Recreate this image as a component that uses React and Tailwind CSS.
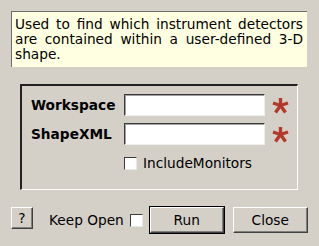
import React from 'react';

const FONT = { fontFamily: '"DejaVu Sans", Verdana, sans-serif' };

function Asterisk() {
  return (
    <svg width="17" height="17" viewBox="0 0 17 17" className="shrink-0">
      <g stroke="#b3392b" strokeWidth="3.4" strokeLinecap="butt">
        <line x1="8.5" y1="9" x2="8.5" y2="1" />
        <line x1="8.5" y1="8.5" x2="1" y2="6" />
        <line x1="8.5" y1="8.5" x2="16" y2="6" />
        <line x1="8.5" y1="8.5" x2="3.5" y2="15.5" />
        <line x1="8.5" y1="8.5" x2="13.5" y2="15.5" />
      </g>
    </svg>
  );
}

function Field({ label }) {
  return (
    <div className="flex items-center h-[22px]">
      <span className="w-[93px] font-bold text-[13.7px] text-black">{label}</span>
      <div className="w-[141px] h-[22px] bg-white border-t border-l border-t-[#3c3c3c] border-l-[#3c3c3c] border-r border-b border-r-[#f0f0f0] border-b-[#f0f0f0] shadow-[inset_1px_1px_0_#a0a0a0]" />
      <div className="ml-[7px]">
        <Asterisk />
      </div>
    </div>
  );
}

function Check() {
  return (
    <div className="w-[13px] h-[13px] bg-white border-t border-l border-t-[#3c3c3c] border-l-[#3c3c3c] border-r border-b border-r-[#e8e8e8] border-b-[#e8e8e8] shrink-0" />
  );
}

export default function App() {
  return (
    <div className="w-[319px] h-[246px] bg-[#d4d0c8] flex flex-col pt-[11px] overflow-hidden text-black" style={FONT}>
      <div className="ml-[11px] w-[296px] h-[56px] bg-[#ffffe1] border-t border-l border-[#6e6e6e] border-r-0 border-b-0 pl-[3px] pr-[4px] pt-[5px]">
        <p className="text-[13.7px] leading-[15px] text-justify">
          Used to find which instrument detectors are contained within a user-defined 3-D shape.
        </p>
      </div>

      <div className="ml-[20px] mt-[17px] w-[278px] h-[106px] border-t-2 border-l-2 border-t-[#222] border-l-[#222] border-r border-b border-r-white border-b-white pl-[9px] pt-[8px] flex flex-col gap-[7px]">
        <Field label="Workspace" />
        <Field label="ShapeXML" />
        <div className="flex items-center h-[22px] pl-[93px] gap-[6px]">
          <Check />
          <span className="text-[13.7px]">IncludeMonitors</span>
        </div>
      </div>

      <div className="mt-[16px] ml-[11px] flex items-start h-[28px] text-[13.7px]">
        <button className="mt-[1px] w-[22px] h-[22px] flex items-center justify-center border-t border-l border-t-white border-l-white border-r border-b border-r-[#404040] border-b-[#404040] shadow-[inset_-1px_-1px_0_#808080]">
          ?
        </button>
        <div className="ml-[16px] h-[28px] flex items-center gap-[6px]">
          <span>Keep Open</span>
          <Check />
        </div>
        <button className="ml-[6px] w-[76px] h-[28px] border border-black flex items-center justify-center">
          <div className="w-full h-full flex items-center justify-center border-t border-l border-t-white border-l-white border-r border-b border-r-[#404040] border-b-[#404040] shadow-[inset_-1px_-1px_0_#808080]">
            Run
          </div>
        </button>
        <button className="ml-[8px] mt-[1px] w-[75px] h-[26px] flex items-center justify-center border-t border-l border-t-white border-l-white border-r border-b border-r-[#404040] border-b-[#404040] shadow-[inset_-1px_-1px_0_#808080]">
          Close
        </button>
      </div>
    </div>
  );
}
